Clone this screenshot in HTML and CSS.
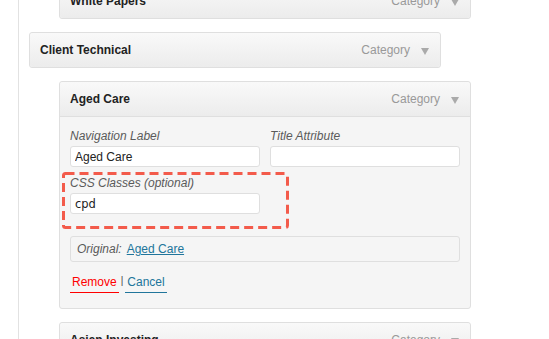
FILE: index.html
```html
<!DOCTYPE html>
<html lang="en">
<head>
<meta charset="utf-8">
<title>Menu items</title>
<link rel="stylesheet" href="styles.css">
</head>
<body>
<div class="menu">
  <div class="item depth-1 first">
    <div class="item-bar">
      <span class="item-title">White Papers</span>
      <span class="item-controls"><span class="item-type">Category</span><span class="arrow"></span></span>
    </div>
  </div>
  <div class="item depth-0">
    <div class="item-bar">
      <span class="item-title">Client Technical</span>
      <span class="item-controls"><span class="item-type">Category</span><span class="arrow"></span></span>
    </div>
  </div>
  <div class="item depth-1 open">
    <div class="item-bar">
      <span class="item-title">Aged Care</span>
      <span class="item-controls"><span class="item-type">Category</span><span class="arrow"></span></span>
    </div>
    <div class="item-settings">
      <div class="field-row">
        <label class="field">
          <span class="field-label">Navigation Label</span>
          <input class="field-input" type="text" value="Aged Care">
        </label>
        <label class="field">
          <span class="field-label">Title Attribute</span>
          <input class="field-input" type="text" value="">
        </label>
      </div>
      <div class="field css-field">
        <span class="field-label">CSS Classes (optional)</span>
        <input class="field-input mono" type="text" value="cpd">
        <svg class="highlight" preserveAspectRatio="none" viewBox="0 0 227 57" width="227" height="57">
          <rect x="1.5" y="1.5" width="224" height="54" rx="2" ry="2" fill="none" stroke="#f35b4b" stroke-width="3" stroke-dasharray="9 5"/>
        </svg>
      </div>
      <div class="original">
        <span class="original-label">Original:</span>
        <a class="link" href="#">Aged Care</a>
      </div>
      <div class="actions">
        <a class="action remove" href="#">Remove</a><span class="sep">|</span><a class="action cancel" href="#">Cancel</a>
      </div>
    </div>
  </div>
  <div class="item depth-1">
    <div class="item-bar">
      <span class="item-title">Asian Investing</span>
      <span class="item-controls"><span class="item-type">Category</span><span class="arrow"></span></span>
    </div>
  </div>
</div>
</body>
</html>
```
FILE: styles.css
```css
html, body {
  margin: 0;
  padding: 0;
  background: #ffffff;
  height: 339px;
  overflow: hidden;
}
body {
  font-family: "Liberation Sans", Arial, Helvetica, sans-serif;
  font-size: 12px;
  color: #333;
}
.menu {
  margin-left: 18px;
  border-left: 1px solid #e2e2e2;
  height: 339px;
  overflow: hidden;
  padding-left: 10px;
  width: 460px;
}
.item {
  width: 412px;
  box-sizing: border-box;
  border: 1px solid #dfdfdf;
  border-radius: 3px;
  margin-bottom: 13px;
  background: #f5f5f5;
}
.item.first {
  margin-top: -17px;
}
.depth-1 {
  margin-left: 30px;
}
.item-bar {
  height: 34px;
  display: flex;
  align-items: center;
  justify-content: space-between;
  padding: 0 11px 0 10px;
  background: linear-gradient(to bottom, #f9f9f9, #ececec);
  border-radius: 3px;
}
.open .item-bar {
  border-bottom: 1px solid #dfdfdf;
  border-radius: 3px 3px 0 0;
}
.item-title {
  font-weight: bold;
  color: #222;
}
.item-controls {
  display: flex;
  align-items: center;
  gap: 11px;
}
.item-type {
  color: #999;
}
.arrow {
  width: 0;
  height: 0;
  border-left: 4px solid transparent;
  border-right: 4px solid transparent;
  border-top: 7px solid #aaa;
  margin-top: 2px;
}
.item-settings {
  padding: 10px 10px 15px 10px;
}
.field-row {
  display: grid;
  grid-template-columns: 190px 190px;
  column-gap: 10px;
}
.field {
  display: flex;
  flex-direction: column;
  width: 190px;
}
.field-label {
  font-style: italic;
  color: #5a5a5a;
  line-height: 19px;
}
.field-input {
  box-sizing: border-box;
  height: 21px;
  width: 190px;
  margin: 0;
  border: 1px solid #dfdfdf;
  border-radius: 3px;
  background: #fff;
  padding: 0 4px;
  font-family: "Liberation Sans", Arial, sans-serif;
  font-size: 12px;
  color: #222;
  outline: none;
}
.field-input.mono {
  font-family: "DejaVu Sans", sans-serif;
  font-size: 11.5px;
  color: #222;
}
.css-field {
  position: relative;
  margin-top: 7px;
}
.highlight {
  position: absolute;
  left: -8px;
  top: -2px;
  width: 227px;
  height: 57px;
  pointer-events: none;
}
.original {
  margin-top: 22px;
  box-sizing: border-box;
  height: 26px;
  border: 1px solid #dfdfdf;
  border-radius: 3px;
  padding: 0 6px;
  display: flex;
  align-items: center;
  gap: 5px;
}
.original-label {
  font-style: italic;
  color: #5a5a5a;
}
.link {
  color: #21759b;
  text-decoration: underline;
}
.actions {
  margin-top: 12px;
  display: flex;
  align-items: flex-start;
}
.action {
  display: inline-block;
  line-height: 16px;
  padding: 0 2px 2px 2px;
  text-decoration: none;
}
.remove {
  color: #f00;
  border-bottom: 1px solid #f00;
}
.cancel {
  color: #21759b;
  border-bottom: 1px solid #21759b;
}
.sep {
  margin: 0 2px;
  color: #444;
  font-size: 10px;
  line-height: 14px;
}
```
